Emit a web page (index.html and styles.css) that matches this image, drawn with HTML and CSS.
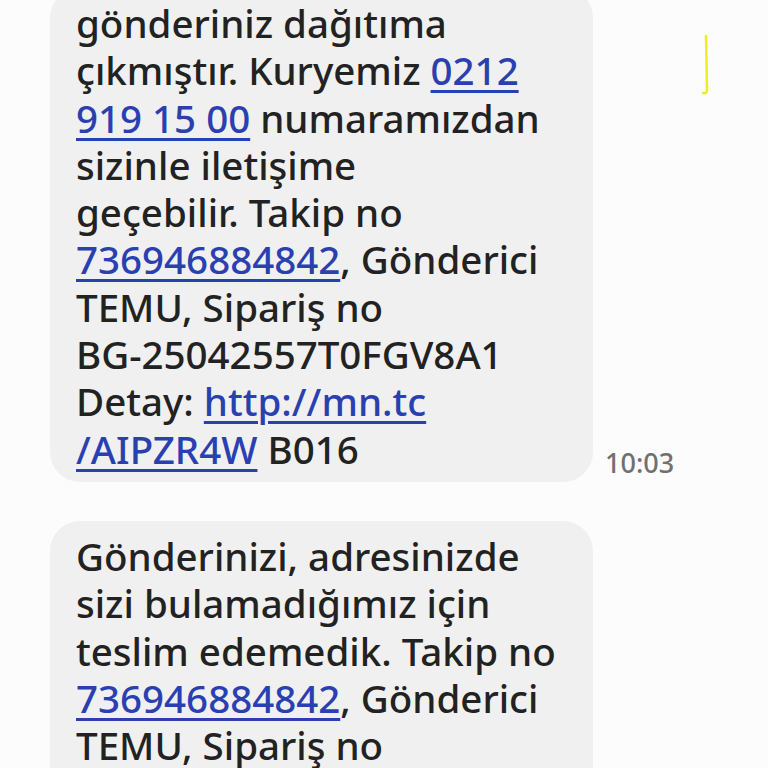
FILE: index.html
```html
<!DOCTYPE html>
<html lang="tr">
<head>
  <meta charset="UTF-8" />
  <meta name="viewport" content="width=device-width, initial-scale=1.0"/>
  <title>Mesajlar</title>
  <link rel="stylesheet" href="styles.css">
</head>
<body>
  <div class="thread">
    <div class="row">
      <div class="bubble">
        gönderiniz dağıtıma<br>
        çıkmıştır. Kuryemiz <a href="#">0212</a><br>
        <a href="#">919 15 00</a> numaramızdan<br>
        sizinle iletişime<br>
        geçebilir. Takip no<br>
        <a href="#">736946884842</a>, Gönderici<br>
        TEMU, Sipariş no<br>
        BG-25042557T0FGV8A1<br>
        Detay: <a href="#">http://mn.tc<br>/AIPZR4W</a> B016
      </div>
      <span class="time">10:03</span>
    </div>

    <div class="row">
      <div class="bubble">
        Gönderinizi, adresinizde<br>
        sizi bulamadığımız için<br>
        teslim edemedik. Takip no<br>
        <a href="#">736946884842</a>, Gönderici<br>
        TEMU, Sipariş no<br>
        BG-25042557T0FGV8A1
      </div>
    </div>
  </div>

  <svg class="mark" width="20" height="70" viewBox="0 0 20 70">
    <path d="M8 6 L9 60 Q9 64 5 63" fill="none" stroke="#eeee22" stroke-width="2.5" stroke-linecap="round"/>
  </svg>
</body>
</html>
```

FILE: styles.css
```css
body {
  margin: 0;
  padding: 0;
  background-color: #fcfcfc;
  font-family: "Noto Sans", "Open Sans", sans-serif;
  color: #222;
  height: 768px;
  overflow: hidden;
  position: relative;
}
.thread {
  display: flex;
  flex-direction: column;
  gap: 39px;
  margin-top: -12px;
  padding-left: 50px;
}
.row {
  display: flex;
  align-items: flex-end;
  gap: 12px;
}
.bubble {
  width: 543px;
  box-sizing: border-box;
  background-color: #f0f0f0;
  border-radius: 30px;
  padding: 12px 20px 9px 26px;
  font-size: 38.5px;
  font-weight: 500;
  line-height: 47.3px;
}
.bubble a {
  color: #2a40b0;
  text-decoration: underline;
  text-decoration-thickness: 3px;
  text-underline-offset: 5px;
}
.time {
  font-size: 27px;
  font-weight: 500;
  color: #707070;
  line-height: 1;
  padding-bottom: 6px;
}
.mark {
  position: absolute;
  left: 698px;
  top: 30px;
}
```
